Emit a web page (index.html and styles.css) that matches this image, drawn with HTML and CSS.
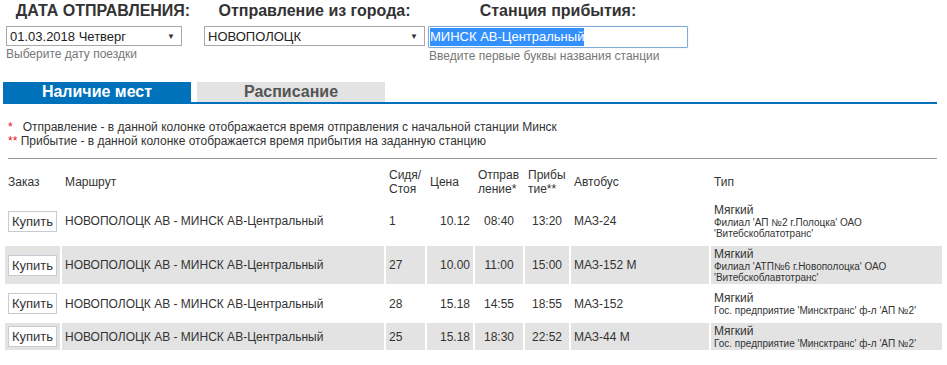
FILE: index.html
```html
<!DOCTYPE html>
<html lang="ru">
<head>
  <meta charset="UTF-8" />
  <meta name="viewport" content="width=device-width, initial-scale=1.0"/>
  <title>Расписание автобусов</title>
  <link rel="stylesheet" href="styles.css">
</head>
<body>

  <div class="filters">
    <div class="field field-date">
      <div class="field-label">ДАТА ОТПРАВЛЕНИЯ:</div>
      <div class="select-box">
        <span>01.03.2018 Четверг</span>
        <span class="arrow">▼</span>
      </div>
      <div class="hint">Выберите дату поездки</div>
    </div>
    <div class="field field-city">
      <div class="field-label">Отправление из города:</div>
      <div class="select-box">
        <span>НОВОПОЛОЦК</span>
        <span class="arrow">▼</span>
      </div>
    </div>
    <div class="field field-station">
      <div class="field-label">Станция прибытия:</div>
      <div class="input-box"><span class="selected">МИНСК АВ-Центральный</span></div>
      <div class="hint">Введите первые буквы названия станции</div>
    </div>
  </div>

  <div class="tabs">
    <div class="tab active">Наличие мест</div>
    <div class="tab">Расписание</div>
  </div>

  <div class="notes">
    <p><span class="star">*</span>&nbsp;&nbsp; Отправление - в данной колонке отображается время отправления с начальной станции Минск</p>
    <p><span class="star">**</span> Прибытие - в данной колонке отображается время прибытия на заданную станцию</p>
  </div>

  <hr class="divider">

  <table class="trips">
    <colgroup>
      <col class="c-order">
      <col class="c-route">
      <col class="c-seats">
      <col class="c-price">
      <col class="c-dep">
      <col class="c-arr">
      <col class="c-bus">
      <col class="c-type">
    </colgroup>
    <thead>
      <tr>
        <th>Заказ</th>
        <th>Маршрут</th>
        <th>Сидя/<br>Стоя</th>
        <th>Цена</th>
        <th>Отправ<br>ление*</th>
        <th>Прибы<br>тие**</th>
        <th>Автобус</th>
        <th>Тип</th>
      </tr>
    </thead>
    <tbody>
      <tr>
        <td><button class="buy">Купить</button></td>
        <td>НОВОПОЛОЦК АВ - МИНСК АВ-Центральный</td>
        <td>1</td>
        <td class="price">10.12</td>
        <td class="time">08:40</td>
        <td class="time">13:20</td>
        <td>МАЗ-24</td>
        <td><div class="kind">Мягкий</div><div class="carrier">Филиал 'АП №2 г.Полоцкa' ОАО 'Витебскоблатотранс'</div></td>
      </tr>
      <tr class="alt">
        <td><button class="buy">Купить</button></td>
        <td>НОВОПОЛОЦК АВ - МИНСК АВ-Центральный</td>
        <td>27</td>
        <td class="price">10.00</td>
        <td class="time">11:00</td>
        <td class="time">15:00</td>
        <td>МАЗ-152 М</td>
        <td><div class="kind">Мягкий</div><div class="carrier">Филиал 'АТП№6 г.Новополоцка' ОАО 'Витебскоблавтотранс'</div></td>
      </tr>
      <tr>
        <td><button class="buy">Купить</button></td>
        <td>НОВОПОЛОЦК АВ - МИНСК АВ-Центральный</td>
        <td>28</td>
        <td class="price">15.18</td>
        <td class="time">14:55</td>
        <td class="time">18:55</td>
        <td>МАЗ-152</td>
        <td><div class="kind">Мягкий</div><div class="carrier">Гос. предприятие 'Минсктранс' ф-л 'АП №2'</div></td>
      </tr>
      <tr class="alt">
        <td><button class="buy">Купить</button></td>
        <td>НОВОПОЛОЦК АВ - МИНСК АВ-Центральный</td>
        <td>25</td>
        <td class="price">15.18</td>
        <td class="time">18:30</td>
        <td class="time">22:52</td>
        <td>МАЗ-44 М</td>
        <td><div class="kind">Мягкий</div><div class="carrier">Гос. предприятие 'Минсктранс' ф-л 'АП №2'</div></td>
      </tr>
    </tbody>
  </table>

</body>
</html>
```

FILE: styles.css
```css
* {
  box-sizing: border-box;
}

body {
  margin: 0;
  padding: 0;
  font-family: "Liberation Sans", Arial, sans-serif;
  font-size: 12px;
  color: #333333;
  background: #ffffff;
}

/* filters */

.filters {
  display: flex;
  padding: 1px 0 0 6px;
  height: 82px;
}

.field-date {
  width: 194px;
  margin-right: 4px;
}

.field-city {
  width: 221px;
  margin-right: 3px;
}

.field-station {
  width: 260px;
}

.field-label {
  font-size: 16px;
  font-weight: bold;
  line-height: 19px;
  text-align: center;
  white-space: nowrap;
  color: #333333;
  margin-bottom: 6px;
}

.select-box {
  display: flex;
  align-items: center;
  justify-content: space-between;
  height: 20px;
  border: 1px solid #a9a9a9;
  padding: 0 6px 0 3px;
  font-size: 13px;
  color: #222222;
}

.field-date .select-box {
  width: 176px;
}

.arrow {
  font-size: 8px;
  color: #333333;
}

.input-box {
  height: 22px;
  border: 1px solid #7ea9d8;
  border-radius: 1px;
  box-shadow: 0 0 1px #9ec4ec;
  padding: 1px 1px;
  font-size: 13px;
  line-height: 18px;
}

.selected {
  background: #3390ff;
  color: #ffffff;
  display: inline-block;
}

.hint {
  color: #777777;
  font-size: 12px;
  line-height: 14px;
  margin-top: 1px;
}

.field-station .hint {
  padding-left: 1px;
}

/* tabs */

.tabs {
  display: flex;
  gap: 6px;
  margin: 0 10px 0 3px;
  border-bottom: 2px solid #0072bc;
}

.tab {
  width: 188px;
  height: 20px;
  line-height: 20px;
  text-align: center;
  font-size: 16px;
  font-weight: bold;
  background: #e3e3e3;
  color: #555555;
}

.tab.active {
  background: #0072bc;
  color: #ffffff;
}

/* notes */

.notes {
  margin: 16px 0 0 8px;
}

.notes p {
  margin: 0;
  line-height: 14px;
}

.star {
  color: #e8141b;
}

.divider {
  margin: 10px 10px 0 8px;
  border: none;
  border-top: 1px solid #999999;
}

/* table */

.trips {
  margin: 7px 0 0 3px;
  width: 941px;
  table-layout: fixed;
  border-spacing: 2px;
  font-size: 12px;
}

.c-order { width: 55px; }
.c-route { width: 322px; }
.c-seats { width: 39px; }
.c-price { width: 46px; }
.c-dep { width: 48px; }
.c-arr { width: 44px; }
.c-bus { width: 138px; }
.c-type { width: 231px; }

.trips th {
  font-weight: normal;
  text-align: left;
  line-height: 14px;
  padding: 0 3px;
  height: 28px;
}

.trips td {
  padding: 5px 3px;
  line-height: 14px;
  vertical-align: middle;
}

.trips tr.alt td {
  background: #e3e3e3;
  padding: 1px 3px;
}

.trips td.price {
  text-align: right;
}

.trips td.time {
  text-align: center;
}

.buy {
  font-family: "Liberation Sans", Arial, sans-serif;
  font-size: 13px;
  color: #333333;
  background: #ffffff;
  border: 1px solid #c5ccd3;
  padding: 1px 3px;
  height: 21px;
  margin: 0;
}

.kind {
  font-size: 12px;
  line-height: 14px;
}

.carrier {
  font-size: 10px;
  line-height: 11px;
}
```
